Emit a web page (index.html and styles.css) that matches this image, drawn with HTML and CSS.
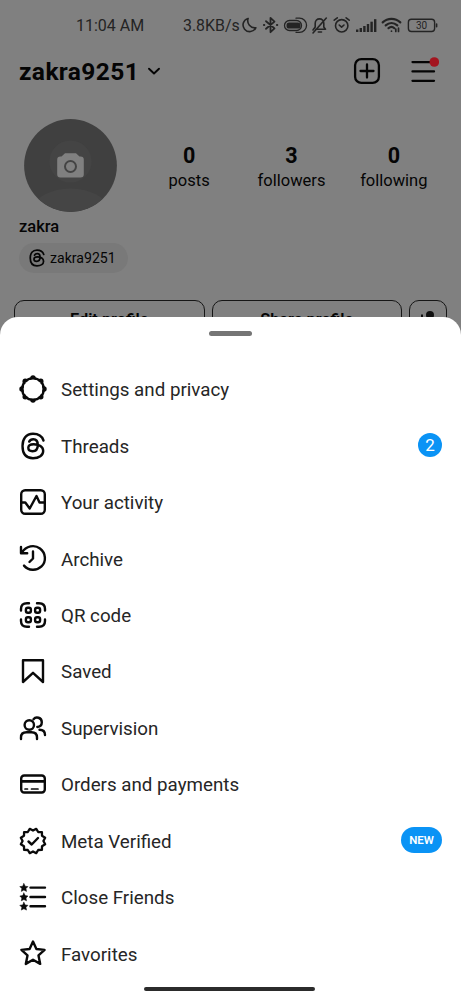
FILE: index.html
```html
<!DOCTYPE html>
<html lang="en">
<head>
<meta charset="utf-8">
<title>Profile menu</title>
<link rel="stylesheet" href="styles.css">
</head>
<body>
<div class="screen">
  <div class="profile">
    <div class="status">
      <span class="clock">11:04 AM</span>
      <span class="speed">3.8KB/s</span>
      <svg class="status-icons" width="200" height="20" viewBox="0 0 200 20" fill="none" stroke="#242424" stroke-width="1.6" stroke-linecap="round" stroke-linejoin="round">
        <path d="M8.100 3.400A6.700 6.700 0 1 0 15.800 12.800A7.200 7.200 0 0 1 8.100 3.400Z"/>
        <path d="M26 6.2L34.5 13.4L30.5 17.2V2.8L34.5 6.6L26 13.8" stroke-width="1.800"/>
        <path d="M24 10h.2M37 10h.2" stroke-width="2.2"/>
        <rect x="44.5" y="5.5" width="17" height="10" rx="5" stroke-width="1.3"/>
        <rect x="46.500" y="7.500" width="14" height="6" rx="2.6" fill="#242424" stroke="none"/>
        <path d="M56 3.2H59.5A7 7 0 0 1 59.5 17.3H56" stroke-width="1.3"/>
        <path d="M75.8 14.3H85.5L83.8 12V8.2A4.3 4.3 0 0 0 75.2 8.2V12L73 15M78.3 17H81.5M86.3 3L73 18" stroke-width="1.600"/>
        <circle cx="101.7" cy="10.8" r="6.2"/>
        <path d="M99.2 10L101.6 12.2L104 10M94.2 5.2L97.3 2.8M109.2 5.2L106.1 2.8"/>
        <g fill="#242424" stroke="none"><rect x="116" y="14.5" width="2.4" height="2.5"/><rect x="119.6" y="13" width="2.4" height="4"/><rect x="123.2" y="11" width="2.4" height="6"/><rect x="126.8" y="9" width="2.4" height="8"/><rect x="130.4" y="6.7" width="2.4" height="10.3"/><rect x="134" y="4.2" width="2.4" height="12.8"/></g>
        <path d="M142.7 7.4C147.7 2.6 155.3 2.6 160.3 7.4M145.7 10.4C149.2 7.2 153.8 7.2 157.3 10.4M148.5 13.2C150.4 11.6 152.6 11.6 154.4 13.2" stroke-width="2.200"/>
        <path d="M151.5 16V16.2M158.5 13V16.5M155.8 14V16.5" stroke-width="1.7"/>
        <rect x="168.4" y="4.3" width="26.2" height="12.2" rx="3" stroke-width="1.4"/>
        <path d="M196.6 9V11.8" stroke-width="1.6"/>
        <text x="181.6" y="14" text-anchor="middle" fill="#242424" stroke="none" class="battery">30</text>
      </svg>
    </div>
    <header class="topbar">
      <h1 class="handle">zakra9251</h1>
      <svg class="chevron" width="14" height="10" viewBox="0 0 14 10"><path d="M2 2.700L7 7.500L12 2.700" fill="none" stroke="#050505" stroke-width="1.9" stroke-linecap="round" stroke-linejoin="round"/></svg>
      <svg class="add" width="28" height="28" viewBox="0 0 28 28" fill="none" stroke="#050505" stroke-width="2.3" stroke-linecap="round"><rect x="2.1" y="2.1" width="23.8" height="23.8" rx="6.2"/><path d="M14 7.5V20.5M7.5 14H20.5"/></svg>
      <svg class="burger" width="30" height="30" viewBox="0 0 30 30"><path d="M3.5 6.1H25M3.5 15.4H25M3.5 24.8H25" stroke="#050505" stroke-width="2.3" stroke-linecap="round"/><circle cx="25.3" cy="6" r="4.8" fill="#a3151f"/></svg>
    </header>
    <section class="summary">
      <svg class="avatar" width="94" height="94" viewBox="0.500 0.500 94 94">
        <clipPath id="disc"><circle cx="47" cy="47" r="46.4"/></clipPath>
        <g clip-path="url(#disc)"><rect width="94" height="94" fill="#404040"/><circle cx="47" cy="43" r="21" fill="#444"/><ellipse cx="47" cy="92" rx="38" ry="22" fill="#454545"/></g>
        <path d="M38 38L41.5 34.7H52.5L56 38H57Q60.3 38 60.3 41.3V55.7Q60.3 59 57 59H37Q33.7 59 33.7 55.7V41.3Q33.7 38 37 38Z" fill="#808080"/>
        <circle cx="47" cy="48" r="5.5" fill="none" stroke="#444" stroke-width="2"/>
      </svg>
      <div class="stats">
        <div class="stat"><b class="count">0</b><span class="label">posts</span></div>
        <div class="stat"><b class="count">3</b><span class="label">followers</span></div>
        <div class="stat"><b class="count">0</b><span class="label">following</span></div>
      </div>
    </section>
    <div class="name">zakra</div>
    <div class="chip">
      <svg width="18" height="18" viewBox="0 0 28 28" fill="none" stroke="#050505" stroke-width="2.700" stroke-linecap="round"><path id="threads" d="M24.500 8.500C23 4 19 1.800 14 1.800C7 1.800 3.500 6.800 3.500 14C3.500 21.500 7 26.200 14 26.200C20 26.200 24.200 23.300 24.200 19C24.200 14.500 20 12.200 14.800 12.200C11.500 12.200 9.300 13.400 9.300 15.800C9.300 18 11.200 19.200 13.500 19.200C17 19.200 18.800 16.800 18.800 13C18.800 9.500 17.500 7.300 14.300 7.300C12.300 7.300 11 8 10.200 9.600"/></svg>
      <span>zakra9251</span>
    </div>
    <div class="actions">
      <div class="button">Edit profile</div>
      <div class="button">Share profile</div>
      <div class="button small"><svg width="20" height="20" viewBox="0 0 20 20" fill="#101010"><circle cx="12" cy="5" r="4"/><path d="M5.5 20C5.5 8.5 19.5 8.5 19.5 20ZM3 4.5H5V7H7.500V9H5V11.500H3V9H.5V7H3Z"/></svg></div>
    </div>
  </div>

  <div class="sheet">
    <div class="grabber"></div>
    <ul class="menu">
      <li class="item"><svg class="icon" viewBox="0 0 28 28"><circle cx="14" cy="14" r="10.800" stroke-width="2.500"/><g fill="#0a0a0a" stroke="none"><circle cx="14" cy="3" r="2.700"/><circle cx="21.800" cy="6.200" r="2.700"/><circle cx="25" cy="14" r="2.700"/><circle cx="21.800" cy="21.800" r="2.700"/><circle cx="14" cy="25" r="2.700"/><circle cx="6.200" cy="21.800" r="2.700"/><circle cx="3" cy="14" r="2.700"/><circle cx="6.200" cy="6.200" r="2.700"/></g><circle cx="14" cy="14" r="9.400" fill="#fff" stroke="none"/></svg><span class="text">Settings and privacy</span></li>
      <li class="item"><svg class="icon" viewBox="0 0 28 28"><use href="#threads"/></svg><span class="text">Threads</span><span class="badge">2</span></li>
      <li class="item"><svg class="icon" viewBox="0 0 28 28"><rect x="2.200" y="2.200" width="23.600" height="23.600" rx="4"/><path d="M2.500 14.500H6.300L10.700 20.500L17.500 8L20.500 14.500H25.500"/></svg><span class="text">Your activity</span></li>
      <li class="item"><svg class="icon" viewBox="0 0 28 28"><path d="M3 8.500C7 1.800 15.500 .300 21 4.500C27 9 27.500 17.500 22.500 22.400C17.500 27.200 9.500 26.800 5 21.600M2 3V9.200H8.200M14 7.500V14.500L10.500 18"/></svg><span class="text">Archive</span></li>
      <li class="item"><svg class="icon" viewBox="0 0 28 28"><path d="M2 9.500V8Q2 2.200 8 2.200H10M18 2.200H20Q26 2.200 26 8V9.500M26 18.500V20Q26 25.800 20 25.800H18M10 25.800H8Q2 25.800 2 20V18.500"/><g><rect x="6.900" y="6.800" width="5" height="5" rx="2"/><rect x="16.100" y="6.800" width="5" height="5" rx="2"/><rect x="6.900" y="16.200" width="5" height="5" rx="2"/><rect x="16.100" y="16.200" width="5" height="5" rx="2"/></g></svg><span class="text">QR code</span></li>
      <li class="item"><svg class="icon" viewBox="0 0 28 28"><path d="M4 3.200H24V25L14 15.800L4 25Z"/></svg><span class="text">Saved</span></li>
      <li class="item"><svg class="icon" viewBox="0 0 28 28"><circle cx="10.300" cy="11" r="4.700"/><path d="M2 25V23.500Q2 18.300 7.500 18.300H12.500Q18 18.300 18 23.500V25M14.500 5.200C17 2 22.800 3.500 22.800 8.300C22.800 11 20.800 12.800 18.300 13M20.500 15.800Q26 15.800 26 21"/></svg><span class="text">Supervision</span></li>
      <li class="item"><svg class="icon" viewBox="0 0 28 28"><rect x="2.200" y="5.500" width="23.600" height="17" rx="3"/><path d="M2.500 11.300H25.500" stroke-width="2.800"/><path d="M6 19H8.500M12.500 19H19" stroke-width="1.700"/></svg><span class="text">Orders and payments</span></li>
      <li class="item"><svg class="icon" viewBox="0 0 28 28"><path stroke-width="2.300" d="M24.400 14L26.170 17.260L23 19.200L22.910 22.910L19.200 23L17.260 26.170L14 24.400L10.740 26.170L8.800 23L5.090 22.910L5 19.200L1.830 17.260L3.600 14L1.830 10.740L5 8.800L5.090 5.090L8.800 5L10.740 1.830L14 3.600L17.260 1.830L19.200 5L22.910 5.090L23 8.800L26.170 10.740Z"/><path d="M9.500 14.500L12.700 17.500L19 11"/></svg><span class="text">Meta Verified</span><span class="badge new">NEW</span></li>
      <li class="item"><svg class="icon" viewBox="0 0 28 28"><path d="M11.500 4.600H26M11.500 14H26M11.500 23.300H26"/><g fill="#0a0a0a" stroke="#0a0a0a" stroke-width=".5"><path id="star" d="M4.900 .6L6.200 3.200L9 3.600L7 5.600L7.500 8.400L4.900 7.100L2.300 8.400L2.800 5.600L.8 3.600L3.600 3.200Z"/><use href="#star" y="9.400"/><use href="#star" y="18.700"/></g></svg><span class="text">Close Friends</span></li>
      <li class="item"><svg class="icon" viewBox="0 0 28 28"><path d="M14 2.500L17.400 10L25.600 10.900L19.500 16.400L21.200 24.900L14 20.700L6.800 24.900L8.500 16.400L2.400 10.900L10.600 10Z"/></svg><span class="text">Favorites</span></li>
    </ul>
    <div class="home-bar"></div>
  </div>
</div>
</body>
</html>
```

FILE: styles.css
```css
* { box-sizing: border-box; }
body { margin: 0; font-family: Roboto, "Liberation Sans", sans-serif; }
.screen { position: relative; width: 461px; height: 1000px; overflow: hidden; background: #808080; color: #050505; }
svg { display: block; flex: none; }

.status { display: flex; align-items: center; height: 50px; padding-left: 76px; font-size: 16px; color: #242424; }
.clock, .speed { padding-top: 1px; white-space: nowrap; }
.clock { width: 107px; }
.speed { width: 57px; font-size: 15.900px; }
.battery { font-size: 10px; }

.topbar { display: flex; align-items: center; height: 42px; padding-left: 19px; }
.handle { margin: 0; width: 128px; font-size: 24.500px; letter-spacing: .4px; font-weight: 700; white-space: nowrap; }
.add { margin-left: 192px; }
.burger { margin-left: 28px; }

.summary { display: flex; padding: 27px 16px 0 24px; }
.stats { display: flex; flex: 1; margin-left: 20px; padding-top: 24px; }
.stat { display: flex; flex-direction: column; align-items: center; flex: 1; }
.count { font-size: 21.5px; line-height: 25px; font-weight: 700; }
.label { font-size: 16.500px; line-height: 26px; }

.name { padding: 4px 0 0 19px; font-size: 16.500px; line-height: 20px; font-weight: 500; }
.chip { display: flex; align-items: center; gap: 4px; width: 109px; height: 30px; margin: 6px 0 0 19px; padding-left: 9px; border-radius: 15px; background: #797979; font-size: 14.100px; }

.actions { display: flex; gap: 7px; margin: 27px 14px 0; }
.button { display: flex; align-items: center; justify-content: center; width: 191px; height: 39px; border: 1.500px solid #161616; border-radius: 10px; font-size: 16.300px; font-weight: 600; }
.button.small { width: 38px; }

.sheet { position: absolute; left: 0; right: 0; bottom: 0; height: 683px; border-radius: 18px 18px 0 0; background: #fff; }
.grabber { width: 43px; height: 5px; margin: 14px auto 0; border-radius: 3px; background: #757575; }
.menu { display: grid; grid-auto-rows: 56.430px; margin: 25px 0 0; padding: 0 19px; list-style: none; }
.item { display: flex; align-items: center; }
.icon { width: 28px; height: 28px; fill: none; stroke: #0a0a0a; stroke-width: 2.400; stroke-linecap: round; stroke-linejoin: round; }
.text { flex: 1; margin-left: 14px; padding-top: 2.300px; font-size: 18.750px; color: #262626; }
.badge { display: flex; align-items: center; justify-content: center; width: 24px; height: 24px; margin-bottom: 1px; border-radius: 13px; background: #0a93f5; color: #fff; font-size: 17px; }
.badge.new { width: 41px; height: 26px; font-size: 11.500px; font-weight: 600; }
.home-bar { width: 171px; height: 4px; margin: 5px 0 0 144px; border-radius: 2px; background: #2b2b2b; }
```
